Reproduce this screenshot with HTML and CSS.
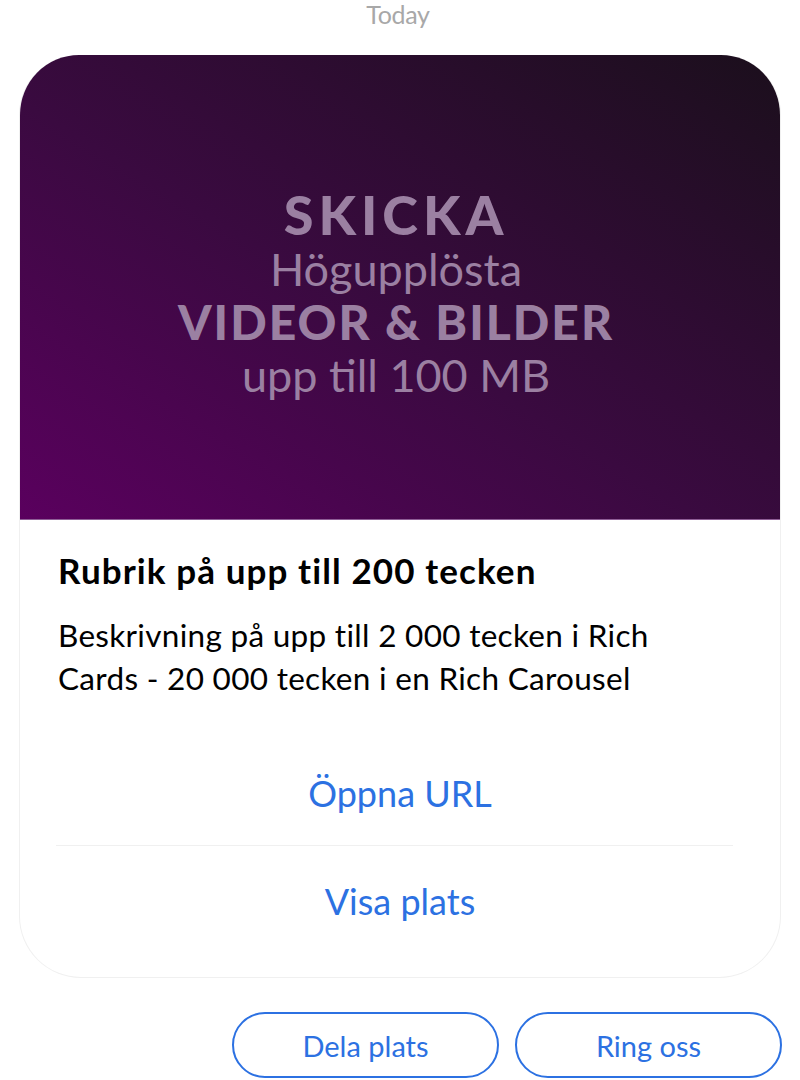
FILE: index.html
```html
<!DOCTYPE html>
<html lang="sv">
<head>
<meta charset="utf-8">
<link rel="stylesheet" href="styles.css">
</head>
<body>
<div class="day">Today</div>
<div class="card">
  <div class="media">
    <div class="media-text">
      <div class="m1">SKICKA</div>
      <div class="m2">Högupplösta</div>
      <div class="m3">VIDEOR &amp; BILDER</div>
      <div class="m2">upp till 100 MB</div>
    </div>
  </div>
  <div class="body">
    <div class="title">Rubrik på upp till 200 tecken</div>
    <div class="desc">Beskrivning på upp till 2 000 tecken i Rich Cards - 20 000 tecken i en Rich Carousel</div>
  </div>
  <div class="action first">Öppna URL</div>
  <div class="sep"></div>
  <div class="action second">Visa plats</div>
</div>
<div class="chips">
  <div class="chip">Dela plats</div>
  <div class="chip">Ring oss</div>
</div>
</body>
</html>
```
FILE: styles.css
```css
* { box-sizing: border-box; }
html, body { margin: 0; padding: 0; background: #fff; }
body {
  font-family: Lato, "Noto Sans", "DejaVu Sans", sans-serif;
  width: 800px;
}
.day {
  height: 55px;
  text-align: center;
  color: #a8a8a8;
  font-size: 25px;
  line-height: 28px;
  padding-right: 4px;
  letter-spacing: -0.3px;
}
.card {
  margin: 0 19px;
  border: 1px solid #f0f0f0;
  border-top: none;
  border-radius: 60px 60px 62px 62px;
  overflow: hidden;
  background: #fff;
}
.media {
  height: 465px;
  background: linear-gradient(to top right, #5a005e 0%, #3a0a40 45%, #1b0f1c 100%);
  border-bottom: 1px solid #8e5e96;
  display: flex;
  align-items: center;
  justify-content: center;
}
.media-text {
  text-align: center;
  color: #9b80a2;
  margin-top: 16px;
  margin-right: 8px;
}
.m1 {
  font-weight: 900;
  font-size: 54px;
  line-height: 54px;
  letter-spacing: 5px;
}
.m3 {
  font-weight: 900;
  font-size: 48px;
  line-height: 52px;
  letter-spacing: 2px;
}
.m2 {
  font-size: 45px;
  line-height: 54px;
}
.body {
  padding: 30px 38px 0 38px;
}
.title {
  font-weight: 700;
  font-size: 35px;
  line-height: 40px;
  letter-spacing: 1.1px;
  color: #000;
}
.desc {
  margin-top: 24px;
  max-width: 630px;
  font-size: 31.5px;
  line-height: 43px;
  letter-spacing: 0.3px;
  color: #000;
}
.action {
  text-align: center;
  color: #2c71e2;
  font-size: 36px;
  line-height: 40px;
}
.action.first { padding: 73px 0 32px; }
.action.second { padding: 35px 0 56px; }
.sep {
  height: 1px;
  background: #f0f0f0;
  margin: 0 47px 0 36px;
}
.chips {
  display: flex;
  justify-content: flex-end;
  gap: 16px;
  margin: 34px 18px 0 0;
}
.chip {
  width: 267px;
  height: 66px;
  border: 2.5px solid #2c71e2;
  border-radius: 33px;
  color: #2c71e2;
  font-size: 29px;
  display: flex;
  align-items: center;
  justify-content: center;
}
```
